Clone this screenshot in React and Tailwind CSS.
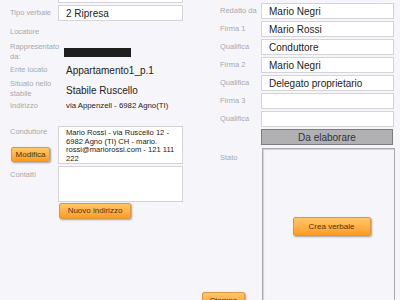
import React from 'react';

const Label = ({ children, className = '' }) => (
  <div className={`text-[7.5px] leading-[10px] text-[#a8a8ad] ${className}`}>{children}</div>
);

const Input = ({ value, className = '' }) => (
  <div className={`h-[16px] bg-white border border-[#d4d4d8] flex items-center px-[7px] text-[10px] text-[#222] ${className}`}>
    {value}
  </div>
);

const OrangeButton = ({ children, className = '' }) => (
  <button
    type="button"
    className={`bg-gradient-to-b from-[#ffc766] to-[#ff9b1c] border border-[#d69a45] rounded-[2px] text-[8px] text-[#4a3510] shadow-[1px_1px_2px_rgba(0,0,0,0.35)] flex items-center justify-center ${className}`}
  >
    {children}
  </button>
);

const rightRows = [
  { label: 'Redatto da', value: 'Mario Negri' },
  { label: 'Firma 1', value: 'Mario Rossi' },
  { label: 'Qualifica', value: 'Conduttore' },
  { label: 'Firma 2', value: 'Mario Negri' },
  { label: 'Qualifica', value: 'Delegato proprietario' },
  { label: 'Firma 3', value: '' },
  { label: 'Qualifica', value: '' },
];

export default function App() {
  return (
    <div className="w-[400px] h-[300px] overflow-hidden bg-[#f6f6fa] flex font-['Liberation_Sans',Arial,sans-serif]">
      {/* left column */}
      <div className="w-[202px] shrink-0 flex flex-col pl-[10px]">
        <div className="ml-[48px] w-[125px] -mt-[13px]">
          <Input value="" />
        </div>

        <div className="flex items-center mt-[2px] h-[16px]">
          <Label className="w-[48px]">Tipo verbale</Label>
          <Input value="2 Ripresa" className="w-[125px]" />
        </div>

        <div className="flex items-center h-[22px]">
          <Label className="w-[48px]">Locatore</Label>
        </div>

        <div className="flex items-center h-[18px]">
          <Label className="w-[48px]">Rappresentato da:</Label>
          <div className="ml-[6px] w-[67px] h-[9px] bg-[#1e1e1e]" />
        </div>

        <div className="flex items-center h-[18px]">
          <Label className="w-[56px]">Ente locato</Label>
          <div className="text-[10px] text-[#222]">Appartamento1_p.1</div>
        </div>

        <div className="flex items-center h-[20px]">
          <Label className="w-[56px]">Situato nello stabile</Label>
          <div className="text-[10px] text-[#222] mt-[3px]">Stabile Ruscello</div>
        </div>

        <div className="flex items-center h-[14px]">
          <Label className="w-[56px]">Indirizzo</Label>
          <div className="text-[7.8px] text-[#222]">via Appenzell - 6982 Agno(TI)</div>
        </div>

        <div className="flex mt-[13px] h-[38px]">
          <div className="w-[48px] flex flex-col pt-[1px]">
            <Label>Conduttore</Label>
            <OrangeButton className="w-[39px] h-[15px] ml-[1px] mt-[10px]">Modifica</OrangeButton>
          </div>
          <div className="w-[125px] bg-white border border-[#d4d4d8] pl-[7px] pr-[5px] pt-[2px] text-[7.6px] leading-[8.5px] text-[#222]">
            Mario Rossi - via Ruscello 12 - 6982 Agno (TI) CH - mario. rossi@mariorossi.com - 121 111 222
          </div>
        </div>

        <div className="flex mt-[2px] h-[36px]">
          <Label className="w-[48px] pt-[4px]">Contatti</Label>
          <div className="w-[125px] bg-white border border-[#d4d4d8]" />
        </div>

        <div className="ml-[49px] mt-[1px]">
          <OrangeButton className="w-[72px] h-[16px]">Nuovo indirizzo</OrangeButton>
        </div>

        <div className="flex-1" />
        <div className="ml-[192px]">
          <OrangeButton className="w-[43px] h-[16px] -mb-[8px] items-start pt-[2px]">Stampa</OrangeButton>
        </div>
      </div>

      {/* right column */}
      <div className="flex-1 flex flex-col pt-[3px]">
        <div className="flex flex-col gap-[2px]">
          {rightRows.map((row, i) => (
            <div key={i} className="flex items-center">
              <Label className="w-[41px] ml-[18px]">{row.label}</Label>
              <Input value={row.value} className="w-[133px]" />
            </div>
          ))}
        </div>

        <div className="ml-[59px] mt-[2px] w-[132px] h-[16px] bg-[#b1b1b3] border border-[#7d7d80] flex items-center justify-center text-[10px] text-[#333]">
          Da elaborare
        </div>

        <div className="flex mt-[3px] flex-1">
          <Label className="w-[42px] ml-[18px] pt-[5px]">Stato</Label>
          <div className="w-[133px] -mb-[4px] border border-[#a9a9ad] shadow-[inset_1px_1px_1px_rgba(0,0,0,0.15)] flex flex-col items-center pt-[68px]">
            <OrangeButton className="w-[78px] h-[19px] ml-[6px]">Crea verbale</OrangeButton>
          </div>
        </div>
      </div>
    </div>
  );
}
